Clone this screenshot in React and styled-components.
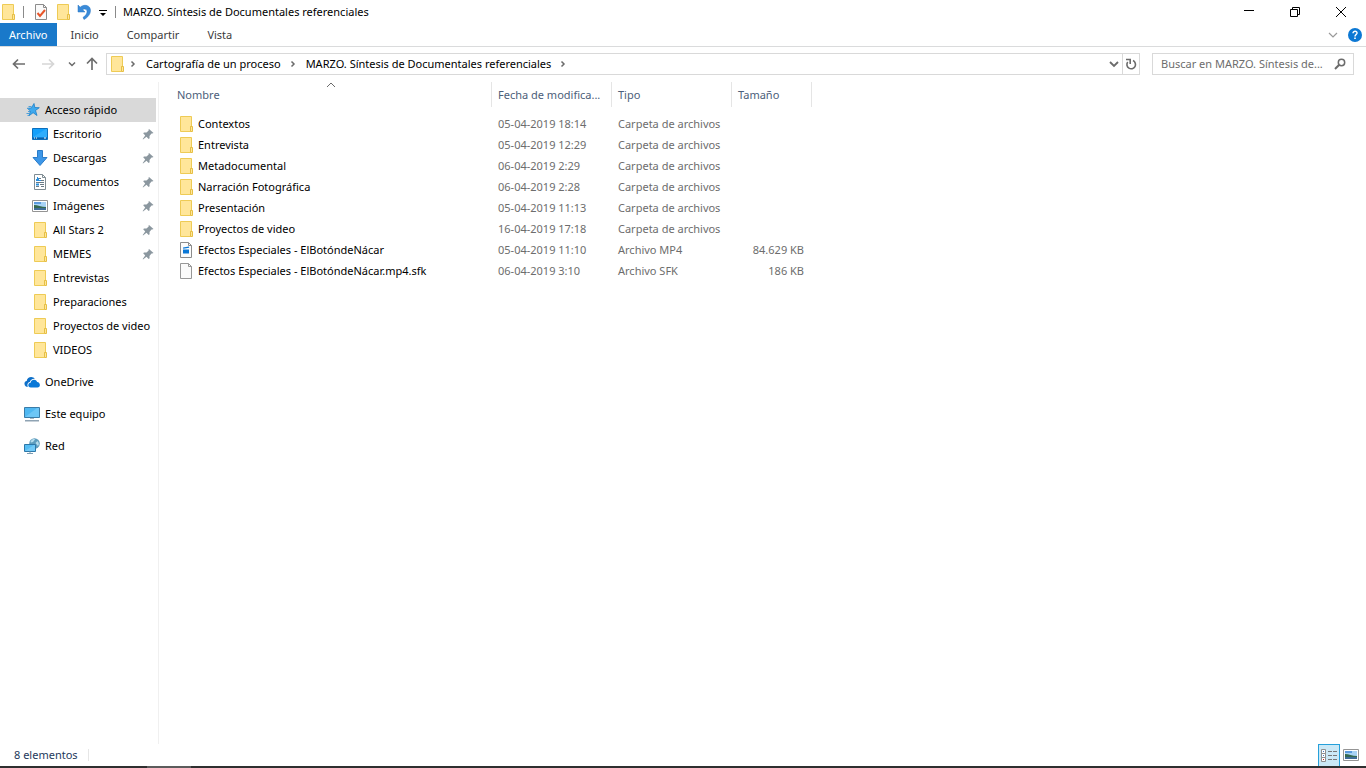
import React from "react";
import styled, { createGlobalStyle } from "styled-components";

const GlobalStyle = createGlobalStyle`
  *, *::before, *::after { box-sizing: border-box; }
  body {
    margin: 0;
    background: #fff;
    color: #000;
    font: 11px/16px "Segoe UI", "Noto Sans", "Open Sans", sans-serif;
  }
  button, input { font: inherit; color: inherit; }
`;

const Window = styled.div`
  display: flex;
  flex-direction: column;
  min-height: 100vh;
  overflow: hidden;
`;

const Icon = styled.svg.attrs((p) => ({
  viewBox: p.viewBox || "0 0 16 16",
  "aria-hidden": true,
}))`
  display: block;
  flex: none;
  width: ${(p) => p.$w || 16}px;
  height: ${(p) => p.$h || 16}px;
`;

const PlainButton = styled.button`
  display: flex;
  align-items: center;
  justify-content: center;
  flex: none;
  padding: 0;
  border: 0;
  background: none;
`;

/* Title bar */
const TitleBar = styled.header`
  display: flex;
  align-items: center;
  height: 23px;
  padding-right: 2px;
`;
const QuickTools = styled.div`
  display: flex;
  align-items: center;
  height: 23px;
`;
const QuickButton = styled(PlainButton)`
  width: ${(p) => p.$w || 22}px;
  height: 23px;
`;
const Divider = styled.span`
  flex: none;
  width: 1px;
  height: 12px;
  margin: 0 ${(p) => p.$after || 0}px 0 ${(p) => p.$before || 0}px;
  background: ${(p) => p.$color || "#8a8a8a"};
`;
const Title = styled.h1`
  flex: 1;
  margin: 0;
  font-size: 11px;
  font-weight: 400;
  white-space: nowrap;
`;
const WindowButton = styled(PlainButton)`
  width: 46px;
  height: 23px;
`;

/* Ribbon tabs */
const Ribbon = styled.nav`
  display: flex;
  align-items: center;
  height: 24px;
  border-bottom: 1px solid #dadbdc;
`;
const Tab = styled(PlainButton)`
  height: 23px;
  padding: 0 ${(p) => (p.$active ? 9 : 14)}px;
  background: ${(p) => (p.$active ? "#1979ca" : "none")};
  color: ${(p) => (p.$active ? "#fff" : "#3b3b3b")};
`;
const RibbonTools = styled.div`
  display: flex;
  align-items: center;
  gap: 9px;
  margin-left: auto;
  padding-right: 3px;
`;

/* Address bar */
const Toolbar = styled.div`
  display: flex;
  align-items: center;
  padding: 6px 12px 7px 8px;
`;
const History = styled.div`
  display: flex;
  align-items: center;
`;
const HistoryButton = styled(PlainButton)`
  width: ${(p) => p.$w}px;
  height: 22px;
`;
const AddressBox = styled.div`
  display: flex;
  flex: 1;
  align-items: center;
  min-width: 0;
  height: 22px;
  margin-right: 12px;
  padding-left: 2px;
  border: 1px solid #d9d9d9;
`;
const Crumbs = styled.ol`
  display: flex;
  flex: 1;
  align-items: center;
  min-width: 0;
  margin: 0;
  padding: 0;
  list-style: none;
`;
const Crumb = styled.li`
  display: flex;
  align-items: center;
`;
const CrumbButton = styled(PlainButton)`
  padding: 0 4px 0 5px;
  white-space: nowrap;
`;
const AddressButton = styled(PlainButton)`
  width: 17px;
  height: 20px;
  border-left: ${(p) => (p.$line ? "1px solid #d9d9d9" : "0")};
`;
const SearchBox = styled.label`
  display: flex;
  align-items: center;
  width: 202px;
  height: 22px;
  padding: 0 7px 0 8px;
  border: 1px solid #d9d9d9;
`;
const SearchInput = styled.input`
  flex: 1;
  min-width: 0;
  padding: 0;
  border: 0;
  outline: 0;
  background: none;
  &::placeholder { color: #6d6d6d; opacity: 1; }
`;

/* Body */
const Body = styled.div`
  display: flex;
  flex: 1;
`;
const Sidebar = styled.nav`
  flex: none;
  width: 159px;
  padding: 16px 2px 0 0;
  border-right: 1px solid #f0f0f0;
`;
const Group = styled.ul`
  margin: 0 0 8px;
  padding: 0;
  list-style: none;
`;
const Place = styled.a`
  display: flex;
  align-items: center;
  gap: 5px;
  height: 24px;
  padding-left: ${(p) => (p.$nested ? 32 : 24)}px;
  background: ${(p) => (p.$selected ? "#d9d9d9" : "none")};
  color: inherit;
  text-decoration: none;
  white-space: nowrap;
`;
const PlaceName = styled.span`
  flex: 1;
`;
const PinSlot = styled.span`
  padding-right: 2px;
`;

const Content = styled.main`
  flex: 1;
  min-width: 0;
`;
const FileTable = styled.table`
  width: 100%;
  border-collapse: separate;
  border-spacing: 0;
  table-layout: fixed;
`;
const Col = styled.col`
  width: ${(p) => (p.$w ? `${p.$w}px` : "auto")};
`;
const HeadCell = styled.th`
  position: relative;
  height: 25px;
  padding: 0 6px;
  padding-left: ${(p) => (p.$first ? 18 : 6)}px;
  border-right: ${(p) => (p.$last ? 0 : "1px solid #e5e5e5")};
  color: #4c607a;
  font-weight: 400;
  text-align: left;
  white-space: nowrap;
`;
const SortMark = styled.span`
  position: absolute;
  top: 0;
  left: calc(50% + 1px);
`;
const Rows = styled.tbody`
  &::before {
    content: "";
    display: block;
    height: 6px;
  }
`;
const Cell = styled.td`
  height: 21px;
  padding: 0 8px 0 6px;
  color: #6d6d6d;
  text-align: ${(p) => (p.$right ? "right" : "left")};
  white-space: nowrap;
`;
const NameCell = styled(Cell)`
  padding-left: 19px;
  color: #000;
`;
const FileName = styled.div`
  display: flex;
  align-items: center;
  gap: 4px;
`;

/* Status bar */
const StatusBar = styled.footer`
  display: flex;
  align-items: center;
  height: 22px;
  padding: 0 4px 0 14px;
  color: #1e395b;
`;
const Views = styled.div`
  display: flex;
  margin-left: auto;
`;
const ViewButton = styled(PlainButton)`
  width: 22px;
  height: 22px;
  border: ${(p) => (p.$active ? "1px solid #26a0da" : "0")};
  border-bottom: 0;
  background: ${(p) => (p.$active ? "#cbe8f6" : "none")};
`;
const TaskbarEdge = styled.div`
  display: flex;
  height: 2px;
  padding-left: 147px;
  background: #2f2f2f;
`;
const TaskbarItem = styled.span`
  width: 44px;
  background: #5c5c5c;
`;

/* Icons */
const Folder = () => (
  <Icon>
    <path d="M2.500.5h11v10h-1v5h-10z" fill="#ffe69a" stroke="#eecb55" />
    <path d="M12.500 10.500h2v5h-2z" fill="#ffe69a" stroke="#e6bf45" />
  </Icon>
);
const CheckDoc = () => (
  <Icon>
    <path d="M2.500.5h8l3 3v12h-11z" fill="#fafafa" stroke="#8c8c8c" />
    <path d="M10.500.5v3h3" fill="none" stroke="#8c8c8c" />
    <path d="M4.500 9l2.500 3 5-6" fill="none" stroke="#e8562a" strokeWidth="2" />
  </Icon>
);
const Undo = () => (
  <Icon>
    <path d="M2 1l2.200 2.200C7 .8 11 .6 13.300 3 16 6.400 14 12.500 8 15.500L7 13.500c4-2.700 5-6.300 3.200-7.900-1.200-1-2.500-.7-3.500.2L9 8H2z" fill="#3a8bd9" stroke="#2b76c2" strokeWidth=".5" />
  </Icon>
);
const MenuMark = () => (
  <Icon>
    <path d="M4 6h8v1H4zM5 9h6l-3 3z" fill="#000" />
  </Icon>
);
const Star = () => (
  <Icon>
    <path d="M10 1.500l.8 4 4.500.2-3.800 2.800 1.500 5-3.900-2.800L5 13.800l1.400-4.700L3.500 6.300l3.900-.4z" fill="#3fa9ee" stroke="#1c7fc8" strokeWidth=".8" />
    <path d="M4.500 4.500h3M3 6.500h2M4 9.500h2M2.500 11.500h3M3.500 13.500h2" stroke="#4d9fd8" strokeWidth="1" />
  </Icon>
);
const Desktop = () => (
  <Icon>
    <path d="M.5 2.500h15v11H.5z" fill="#14a0fb" stroke="#0c6fbd" />
    <path d="M1 11.500h14v1.500H1z" fill="#0a5fa8" />
    <path d="M2 12h1M4 12h1M12 12h2" stroke="#fff" />
    <path d="M1 11L14 3h1v8z" fill="#3db5ff" opacity=".6" />
  </Icon>
);
const Download = () => (
  <Icon>
    <path d="M5.500.5h5v7h4.500L8 15.500 1 7.500h4.500z" fill="#3d97e8" stroke="#2b7cc9" />
  </Icon>
);
const Document = () => (
  <Icon>
    <path d="M2.500.5h8l3 3v12h-11z" fill="#fff" stroke="#7f8c93" />
    <path d="M10.500.5v3h3" fill="none" stroke="#7f8c93" />
    <path d="M7 4.500h2M9 6.500h3M4 12.500h3M9 12.500h3M8 10.500h4M4 8.500h8" stroke="#6b7b86" />
    <path d="M5 3h1v1h1v2h2v1H4V5h1zM4 9.500h3v2H4z" fill="#2b8fdc" />
  </Icon>
);
const Picture = () => (
  <Icon>
    <path d="M.5 2.500h15v11H.5z" fill="#fff" stroke="#949494" />
    <path d="M2 4h12v8H2z" fill="#a8d3f5" />
    <path d="M2 4h7v2H2z" fill="#5b9ade" />
    <path d="M2 7c4 0 7 2 12 2v1H2z" fill="#35694f" />
    <path d="M2 10h12v2H2z" fill="#3f6c97" />
  </Icon>
);
const OneDrive = () => (
  <Icon>
    <path d="M4 12.800A3 3 0 0 1 .5 10C.2 8.400 1.200 7.200 2.700 7 3 4.500 5 3 7.200 3c1.500 0 2.800.7 3.600 1.800-2.700-.2-4.500 1.200-5 3.200C3.700 8.400 2.800 10.700 4 12.800z" fill="#0d6fc9" />
    <path d="M6.800 13.500c-3.400 0-3.300-4.500-.2-4.800.3-3.400 5.600-4 6.500-.7 3.500.1 3.800 5.500.3 5.500z" fill="#0a78d7" />
  </Icon>
);
const Computer = () => (
  <Icon>
    <path d="M.5 1.500h15v10H.5z" fill="#4fb8f2" stroke="#3a7ca8" />
    <path d="M1 11L13 2h2v9z" fill="#8bd3fa" opacity=".5" />
    <path d="M6 12h4v1H6z" fill="#a8b7c2" />
    <path d="M1 14h14v1.500H1z" fill="#8fa3b3" />
  </Icon>
);
const Network = () => (
  <Icon>
    <circle cx="10.500" cy="5.500" r="5.300" fill="#5f9dbd" />
    <path d="M6.500 3.500c2-3 4-2.500 4.500-2l-2 2.500-2 .5zM11.500 5l2-2c2 2 1.500 4 .5 5z" fill="#b5dced" />
    <path d="M.5 6.500h11v7H.5z" fill="#56bdf3" stroke="#2d77a8" />
    <path d="M1 13L10 7h1v6z" fill="#90d8fb" opacity=".5" />
    <path d="M3 15.500h6M6 13.500v2" stroke="#7b9db3" />
  </Icon>
);
const Pin = () => (
  <Icon $w={12} $h={12} viewBox="0 0 12 12">
    <path d="M7 1l4.500 4-1.300.6-.7-.1L7.500 8l.1 2.300-.9.700L4.500 8.800 1 11.500.7 11l2.500-3.500L1.200 5.300 2 4.500l2.500.1L6.700 2.500 6.500 1.700z" fill="#8b979f" />
  </Icon>
);
const Video = () => (
  <Icon>
    <path d="M2.500.5h8l3 3v12h-11z" fill="#fcfcfc" stroke="#8c8c8c" />
    <path d="M10.500.5v3h3" fill="none" stroke="#8c8c8c" />
    <path d="M5 7.500h6v4H5zM5 5.500l6-1 .2 1.300-6 1z" fill="#0a78d7" />
  </Icon>
);
const BlankFile = () => (
  <Icon>
    <path d="M2.500.5h8l3 3v12h-11z" fill="#fafafa" stroke="#979797" />
    <path d="M10.500.5v3h3" fill="none" stroke="#979797" />
  </Icon>
);
const Chevron = ({ d, w = 10, stroke = "#6b6b6b", width = 1.5 }) => (
  <Icon $w={w} $h={10} viewBox="0 0 10 10">
    <path d={d} fill="none" stroke={stroke} strokeWidth={width} />
  </Icon>
);
const Arrow = ({ d, color }) => (
  <Icon>
    <path d={d} fill="none" stroke={color} strokeWidth="1.7" />
  </Icon>
);
const DOWN = "M1 3l4 4 4-4";
const RIGHT = "M3.500 2.500L6 5 3.500 7.500";

const quickPlaces = [
  ["Escritorio", Desktop, true],
  ["Descargas", Download, true],
  ["Documentos", Document, true],
  ["Imágenes", Picture, true],
  ["All Stars 2", Folder, true],
  ["MEMES", Folder, true],
  ["Entrevistas", Folder],
  ["Preparaciones", Folder],
  ["Proyectos de video", Folder],
  ["VIDEOS", Folder],
];
const rootPlaces = [
  ["OneDrive", OneDrive],
  ["Este equipo", Computer],
  ["Red", Network],
];
const files = [
  ["Contextos", "05-04-2019 18:14", "Carpeta de archivos", "", Folder],
  ["Entrevista", "05-04-2019 12:29", "Carpeta de archivos", "", Folder],
  ["Metadocumental", "06-04-2019 2:29", "Carpeta de archivos", "", Folder],
  ["Narración Fotográfica", "06-04-2019 2:28", "Carpeta de archivos", "", Folder],
  ["Presentación", "05-04-2019 11:13", "Carpeta de archivos", "", Folder],
  ["Proyectos de video", "16-04-2019 17:18", "Carpeta de archivos", "", Folder],
  ["Efectos Especiales - ElBotóndeNácar", "05-04-2019 11:10", "Archivo MP4", "84.629 KB", Video],
  ["Efectos Especiales - ElBotóndeNácar.mp4.sfk", "06-04-2019 3:10", "Archivo SFK", "186 KB", BlankFile],
];
const crumbs = ["Cartografía de un proceso", "MARZO. Síntesis de Documentales referenciales"];

function PlaceLink({ name, icon: Glyph, pinned, nested, selected }) {
  return (
    <li>
      <Place href="#" $nested={nested} $selected={selected}>
        <Glyph />
        <PlaceName>{name}</PlaceName>
        {pinned && <PinSlot><Pin /></PinSlot>}
      </Place>
    </li>
  );
}

export default function App() {
  return (
    <>
      <GlobalStyle />
      <Window>
        <TitleBar>
          <QuickTools>
            <Folder />
            <Divider $before={7} $after={6} />
            <QuickButton aria-label="Propiedades"><CheckDoc /></QuickButton>
            <QuickButton aria-label="Nueva carpeta"><Folder /></QuickButton>
            <QuickButton $w={20} aria-label="Deshacer"><Undo /></QuickButton>
            <QuickButton $w={18} aria-label="Personalizar"><MenuMark /></QuickButton>
            <Divider $before={3} $after={7} />
          </QuickTools>
          <Title>MARZO. Síntesis de Documentales referenciales</Title>
          <WindowButton aria-label="Minimizar">
            <Icon $w={10} $h={10} viewBox="0 0 10 10"><path d="M0 3.500h10" stroke="#000" /></Icon>
          </WindowButton>
          <WindowButton aria-label="Restaurar">
            <Icon $w={10} $h={10} viewBox="0 0 10 10"><path d="M.5 2.500h7v7h-7zM2.500 2.500v-2h7v7h-2" fill="none" stroke="#000" /></Icon>
          </WindowButton>
          <WindowButton aria-label="Cerrar">
            <Icon $w={10} $h={10} viewBox="0 0 10 10"><path d="M0 0l10 10M10 0L0 10" stroke="#000" /></Icon>
          </WindowButton>
        </TitleBar>

        <Ribbon>
          <Tab $active>Archivo</Tab>
          <Tab>Inicio</Tab>
          <Tab>Compartir</Tab>
          <Tab>Vista</Tab>
          <RibbonTools>
            <PlainButton aria-label="Expandir la cinta"><Chevron d={DOWN} stroke="#9a9a9a" width={1.2} /></PlainButton>
            <PlainButton aria-label="Ayuda">
              <Icon>
                <circle cx="8" cy="8" r="7" fill="#0c78d4" />
                <path d="M6 6.300C6 3.500 10.300 3.700 10 6.200 9.800 7.500 8 7.600 8 9.500" fill="none" stroke="#fff" strokeWidth="1.500" />
                <path d="M7.200 10.500h1.600v1.600H7.200z" fill="#fff" />
              </Icon>
            </PlainButton>
          </RibbonTools>
        </Ribbon>

        <Toolbar>
          <History>
            <HistoryButton $w={22} aria-label="Atrás"><Arrow color="#6e6e6e" d="M14 8H3M7 3.500L2.500 8 7 12.500" /></HistoryButton>
            <HistoryButton $w={36} aria-label="Adelante"><Arrow color="#d6d6d6" d="M2 8h11M9 3.500L13.500 8 9 12.500" /></HistoryButton>
            <HistoryButton $w={12} aria-label="Ubicaciones recientes"><Chevron d="M2 3.500l3 3 3-3" /></HistoryButton>
            <HistoryButton $w={28} aria-label="Subir"><Arrow color="#6e6e6e" d="M8 14V3M3 7.500L8 2.500l5 5" /></HistoryButton>
          </History>
          <AddressBox>
            <Folder />
            <Crumbs>
              <Crumb><Chevron d={RIGHT} w={16} /></Crumb>
              {crumbs.map((c) => (
                <Crumb key={c}>
                  <CrumbButton>{c}</CrumbButton>
                  <Chevron d={RIGHT} w={16} />
                </Crumb>
              ))}
            </Crumbs>
            <AddressButton aria-label="Ubicaciones anteriores"><Chevron d="M1 3l4 4 4-4" width={1.8} /></AddressButton>
            <AddressButton $line aria-label="Actualizar">
              <Icon $w={12} $h={12} viewBox="0 0 12 12">
                <path d="M2.700 4A4.300 4.300 0 1 0 8 2.600" fill="none" stroke="#6b6b6b" strokeWidth="1.600" />
                <path d="M1 1.500h4.200V6" fill="none" stroke="#6b6b6b" strokeWidth="1.600" />
              </Icon>
            </AddressButton>
          </AddressBox>
          <SearchBox>
            <SearchInput type="text" aria-label="Buscar" placeholder="Buscar en MARZO. Síntesis de..." />
            <Icon $w={12} $h={12} viewBox="0 0 12 12">
              <circle cx="7.500" cy="4.500" r="3.200" fill="none" stroke="#6b6b6b" strokeWidth="1.500" />
              <path d="M5.200 6.800L1 11" stroke="#6b6b6b" strokeWidth="2" />
            </Icon>
          </SearchBox>
        </Toolbar>

        <Body>
          <Sidebar>
            <Group>
              <PlaceLink name="Acceso rápido" icon={Star} selected />
              {quickPlaces.map(([name, icon, pinned]) => (
                <PlaceLink key={name} name={name} icon={icon} pinned={pinned} nested />
              ))}
            </Group>
            {rootPlaces.map(([name, icon]) => (
              <Group key={name}><PlaceLink name={name} icon={icon} /></Group>
            ))}
          </Sidebar>
          <Content>
            <FileTable>
              <colgroup>
                <Col $w={333} />
                <Col $w={120} />
                <Col $w={120} />
                <Col $w={80} />
                <Col />
              </colgroup>
              <thead>
                <tr>
                  <HeadCell $first>
                    Nombre
                    <SortMark><Icon $w={10} $h={6} viewBox="0 0 10 6"><path d="M1 5l4-4 4 4" fill="none" stroke="#6b6b6b" /></Icon></SortMark>
                  </HeadCell>
                  <HeadCell>Fecha de modifica...</HeadCell>
                  <HeadCell>Tipo</HeadCell>
                  <HeadCell>Tamaño</HeadCell>
                  <HeadCell as="td" $last />
                </tr>
              </thead>
              <Rows>
                {files.map(([name, date, type, size, Glyph]) => (
                  <tr key={name}>
                    <NameCell><FileName><Glyph />{name}</FileName></NameCell>
                    <Cell>{date}</Cell>
                    <Cell>{type}</Cell>
                    <Cell $right>{size}</Cell>
                    <Cell />
                  </tr>
                ))}
              </Rows>
            </FileTable>
          </Content>
        </Body>

        <StatusBar>
          <span>8 elementos</span>
          <Divider $before={10} $color="#e6e6e6" />
          <Views>
            <ViewButton $active aria-label="Detalles">
              <Icon>
                <path d="M.5 1.500h4v4h-4zM.5 5.500h4v4h-4zM.5 9.500h4v4h-4z" fill="#fff" stroke="#8f8f8f" />
                <path d="M7 3.500h4M12 3.500h4M7 7.500h4M12 7.500h4M7 11.500h4M12 11.500h4" stroke="#777" />
                <path d="M2 3.500h1M2 7.500h1" stroke="#4778c0" />
                <path d="M2 11.500h1" stroke="#c22" />
              </Icon>
            </ViewButton>
            <ViewButton aria-label="Iconos grandes"><Picture /></ViewButton>
          </Views>
        </StatusBar>
        <TaskbarEdge><TaskbarItem /></TaskbarEdge>
      </Window>
    </>
  );
}
